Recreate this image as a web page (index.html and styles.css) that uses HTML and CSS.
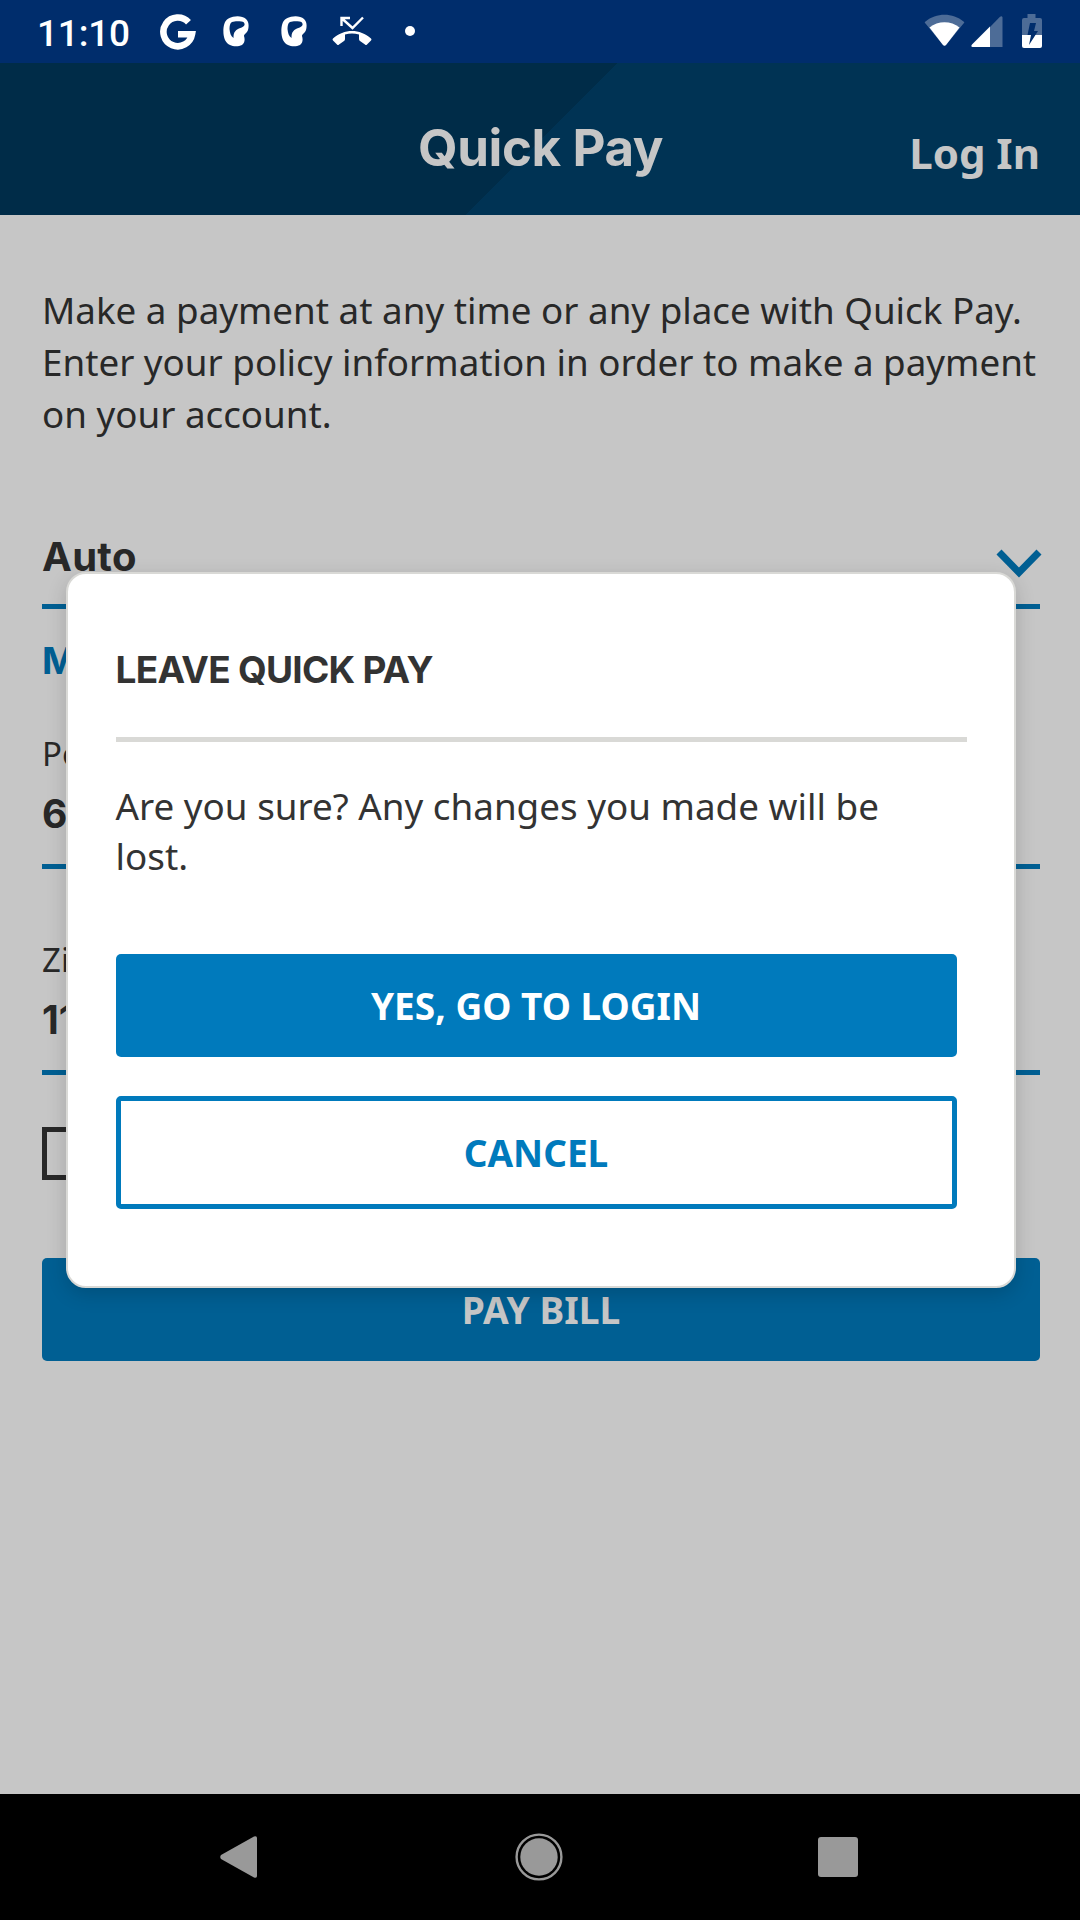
FILE: index.html
```html
<!DOCTYPE html>
<html lang="en">
<head>
<meta charset="utf-8">
<title>Quick Pay</title>
<link rel="stylesheet" href="styles.css">
</head>
<body>
<div class="screen">
  <div class="status">
    <span class="clock">11:10</span>
    <svg class="s-google" width="36" height="36" viewBox="0 0 36 36"><path d="M28.500 8.200A14.400 14.400 0 1 0 32 20.300H18" fill="none" stroke="#fff" stroke-width="6.600"/></svg>
    <svg class="s-app" width="26" height="31" viewBox="0 0 26 31"><path fill="#fff" fill-rule="evenodd" d="M10 .8C14-.3 20 0 23 3c3 3 3 7 2 11-1 3-4 4-4 6 1 3 1 7-2 9-4 2-9 1.500-12 0-4-2-6-6-6.500-11C0 12 1 6 4 3.500 6 2 8 1.200 10 .8zM9 6c-2 1-2.500 4-2.500 7 .5 4 1 7 4 9 0-3 0-5 2-7 2-3 8-3 9-6 .5-2-1-3.500-3-3.500-3-.5-7-.5-9.500.5z"/></svg>
    <svg class="s-app2" width="26" height="31" viewBox="0 0 26 31"><path fill="#fff" fill-rule="evenodd" d="M10 .8C14-.3 20 0 23 3c3 3 3 7 2 11-1 3-4 4-4 6 1 3 1 7-2 9-4 2-9 1.500-12 0-4-2-6-6-6.500-11C0 12 1 6 4 3.500 6 2 8 1.200 10 .8zM9 6c-2 1-2.500 4-2.500 7 .5 4 1 7 4 9 0-3 0-5 2-7 2-3 8-3 9-6 .5-2-1-3.500-3-3.500-3-.5-7-.5-9.500.5z"/></svg>
    <svg class="s-missed" width="40" height="30" viewBox="0 0 40 30"><path d="M9.500 10V2H18M10 2.500l10.500 9.500L31 1.500" fill="none" stroke="#fff" stroke-width="2.400"/><path fill="#fff" d="M1 22.500C12 12.500 28 12.500 39 22.500q1 1 0 2l-4 4q-1 1-2 0l-5-3.500q-1-.500-1-2v-4.500q-7-2-14 0V23q0 1.500-1 2l-5 3.500q-1 1-2 0l-4-4q-1-1 0-2z"/></svg>
    <span class="s-dot"></span>
    <svg class="s-wifi" width="42" height="34" viewBox="0 0 42 34"><path d="M1.500 9.500Q0 8.500 1.500 7.500C12-1.500 29-1.500 39.500 7.500Q41 8.500 39.500 9.500L22 31q-1.500 1.500-3 0z" fill="#4d6c97"/><path d="M5.500 13.500C14 6.500 27 6.500 35.500 13.500L22 31q-1.500 1.500-3 0z" fill="#fff"/></svg>
    <svg class="s-cell" width="32" height="32" viewBox="0 0 32 32"><path d="M29 .8q2-1.500 2.500.7V31H19V11z" fill="#4d6c97"/><path d="M19 10.500V31H1.500q-2-.5-.5-2.500z" fill="#fff"/></svg>
    <svg class="s-batt" width="20" height="35" viewBox="0 0 20 35"><path d="M5.500 0h8v4H18q2 0 2 2v15.500H0V6q0-2 2-2h3.500z" fill="#4d6c97"/><path d="M0 21h20v11q0 2-2 2H2q-2 0-2-2z" fill="#fff"/><path d="M8 9h6l-2 8h4L7 31l2-10H5.500z" fill="#002d6c"/></svg>
  </div>
  <header class="header">
    <h1 class="title">Quick Pay</h1>
    <a class="login">Log In</a>
  </header>
  <main class="page">
    <p class="intro">Make a payment at any time or any place with Quick Pay.<br>Enter your policy information in order to make a payment<br>on your account.</p>
    <div class="select">
      <span class="auto">Auto</span>
      <svg class="chevron" width="46" height="29" viewBox="0 0 46 29"><path d="M3 3l20 20.500L43 3" fill="none" stroke="#005f93" stroke-width="7"/></svg>
    </div>
    <div class="more">M</div>
    <label class="label">Po</label>
    <div class="value">6</div>
    <label class="label zip">Zi</label>
    <div class="value">11</div>
    <div class="check"></div>
    <div class="pay"><span>PAY BILL</span></div>
  </main>
  <nav class="nav">
    <svg width="38" height="44" viewBox="0 0 38 44"><path d="M1 20L34 1.500q3-1 3 1.500v38q0 2.500-3 1.500L1 24q-1.500-2 0-4z" fill="#999"/></svg>
    <svg class="home" width="48" height="48" viewBox="0 0 48 48"><circle cx="24" cy="24" r="22.400" fill="none" stroke="#999" stroke-width="2.400"/><circle cx="24" cy="24" r="18.700" fill="#999"/></svg>
    <svg width="40" height="40" viewBox="0 0 40 40"><rect width="40" height="40" rx="3" fill="#999"/></svg>
  </nav>
  <section class="modal">
    <h2 class="m-title">LEAVE QUICK PAY</h2>
    <p class="m-text">Are you sure? Any changes you made will be<br>lost.</p>
    <div class="m-yes"><span>YES, GO TO LOGIN</span></div>
    <div class="m-cancel"><span>CANCEL</span></div>
  </section>
</div>
</body>
</html>
```
FILE: styles.css
```css
* { box-sizing: border-box; margin: 0; padding: 0; }
body { background: #c6c6c6; font-family: "Noto Sans", sans-serif; color: #282828; }
svg { display: block; flex: none; }
.screen { position: relative; width: 1080px; height: 1920px; overflow: hidden; display: flex; flex-direction: column; white-space: nowrap; }

.status { height: 63px; flex: none; background: #002d6c; display: flex; align-items: flex-start; padding-left: 37px; }
.clock { width: 123px; font: 500 37px/44px Roboto, sans-serif; color: #fff; margin-top: 12px; letter-spacing: -.2px; }
.s-google { margin-top: 14px; }
.s-app { margin: 16px 0 0 27px; }
.s-app2 { margin: 16px 0 0 32px; }
.s-missed { margin: 16px 0 0 25px; }
.s-dot { width: 10px; height: 10px; border-radius: 50%; background: #fff; margin: 26px 0 0 33px; }
.s-wifi { margin: 14px 0 0 509px; }
.s-cell { margin: 16px 0 0 5px; }
.s-batt { margin: 14px 0 0 19px; }

.header { height: 152px; flex: none; background: linear-gradient(to bottom right, #002c48 50%, #003354 50%) 465px 0 / 152px 152px no-repeat, linear-gradient(to right, #002c48 465px, #003354 465px); display: grid; grid-template-columns: 1fr auto 1fr; color: #c6c6c6; padding-right: 40px; }
.title { grid-column: 2; font: 700 51px/60px Inter, sans-serif; letter-spacing: -.4px; margin-top: 55px; margin-left: 41px; }
.login { justify-self: end; font-weight: 700; font-size: 42px; line-height: 56px; margin-top: 62px; }

.page { flex: 1; display: flex; flex-direction: column; padding: 0 40px 0 42px; }
.intro { font-size: 36.75px; line-height: 52px; margin-top: 69px; height: 157px; }
.select { display: flex; justify-content: space-between; margin-top: 83px; height: 85px; border-bottom: 5px solid #005f93; }
.auto { font: 700 40px/48px Inter, sans-serif; letter-spacing: .3px; margin-top: 9px; }
.chevron { margin: 25px -2px 0 0; }
.more { font: 700 37px/44px Inter, sans-serif; color: #005f93; margin-top: 30px; height: 44px; }
.label { font-size: 33px; line-height: 44px; height: 44px; margin-top: 49px; }
.value { font: 700 39px/48px Inter, sans-serif; height: 79px; border-bottom: 5px solid #005f93; margin-top: 14px; }
.zip { margin-top: 69px; }
.zip + .value { height: 79px; margin-top: 14px; }
.check { width: 53px; height: 53px; border: 5px solid #282828; margin-top: 52px; flex: none; }
.pay { height: 103px; flex: none; margin-top: 78px; background: #005f93; color: #c6c6c6; border-radius: 5px; font-weight: 700; font-size: 37.2px; line-height: 103px; text-align: center; }

.nav { height: 126px; flex: none; background: #000; display: flex; align-items: center; justify-content: space-between; padding: 0 222px 0 220px; }
.home { margin: 0 -1px 0 1px; }

.modal { position: absolute; left: 66px; top: 572px; width: 950px; height: 716px; background: #fff; border: 2px solid #d9d9d6; border-radius: 20px; box-shadow: 0 6px 20px rgba(0,0,0,.16); padding: 0 47.5px; color: #333; }
.m-title { font: 700 37px/44px Inter, sans-serif; letter-spacing: -.75px; height: 168px; padding-top: 74px; border-bottom: 5px solid #d9d9d6; }
.m-text { font-size: 36.8px; line-height: 50px; margin-top: 39px; height: 173px; }
.m-yes, .m-cancel { width: 841px; font-weight: 700; font-size: 37px; text-align: center; border-radius: 5px; }
.m-yes { height: 103px; line-height: 103px; background: #007abc; color: #fff; }
.m-cancel { height: 113px; line-height: 104px; margin-top: 39px; border: 5px solid #007abc; color: #007abc; }
```
